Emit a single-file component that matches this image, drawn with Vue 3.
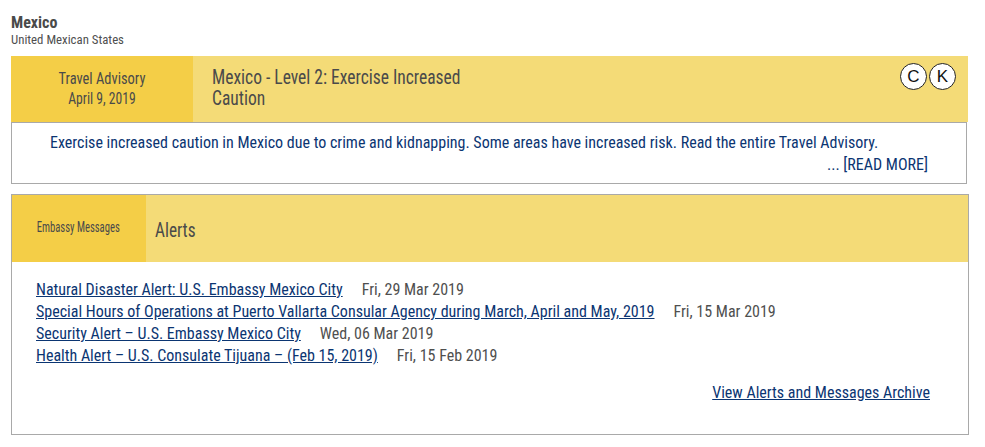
<template>
  <div class="page">
    <h1 class="country">Mexico</h1>
    <div class="official">United Mexican States</div>

    <section class="advisory">
      <div class="banner">
        <div class="banner-tag">
          <div class="tag-title">Travel Advisory</div>
          <div class="tag-date">April 9, 2019</div>
        </div>
        <h2 class="banner-title">Mexico - Level 2: Exercise Increased Caution</h2>
        <div class="badges">
          <span class="badge">C</span>
          <span class="badge">K</span>
        </div>
      </div>
      <div class="advisory-body">
        <p class="summary">Exercise increased caution in Mexico due to crime and kidnapping. Some areas have increased risk. Read the entire Travel Advisory.</p>
        <p class="more">... <a href="#">[READ MORE]</a></p>
      </div>
    </section>

    <section class="messages">
      <div class="msg-head">
        <div class="msg-tag"><span class="squeeze">Embassy Messages</span></div>
        <h2 class="msg-title">Alerts</h2>
      </div>
      <div class="msg-body">
        <ul class="alerts">
          <li v-for="a in alerts" :key="a.title">
            <a href="#" class="alert-link">{{ a.title }}</a>
            <span class="alert-date">{{ a.date }}</span>
          </li>
        </ul>
        <div class="archive"><a href="#" class="alert-link">View Alerts and Messages Archive</a></div>
      </div>
    </section>
  </div>
</template>

<script setup>
const alerts = [
  { title: "Natural Disaster Alert: U.S. Embassy Mexico City", date: "Fri, 29 Mar 2019" },
  { title: "Special Hours of Operations at Puerto Vallarta Consular Agency during March, April and May, 2019", date: "Fri, 15 Mar 2019" },
  { title: "Security Alert – U.S. Embassy Mexico City", date: "Wed, 06 Mar 2019" },
  { title: "Health Alert – U.S. Consulate Tijuana – (Feb 15, 2019)", date: "Fri, 15 Feb 2019" },
];
</script>

<style>
html, body {
  background: #fff;
}
</style>

<style scoped>
.page {
  width: 985px;
  height: 447px;
  box-sizing: border-box;
  padding: 14px 16px 0 11px;
  font-family: Roboto, sans-serif;
  font-stretch: 75%;
  color: #4f4f4f;
  overflow: hidden;
}
.country {
  margin: 0;
  font-size: 16px;
  line-height: 18px;
  font-weight: 700;
  color: #4a4a4a;
}
.official {
  font-size: 12.8px;
  line-height: 15px;
  margin-bottom: 9px;
}
.banner {
  display: flex;
  height: 66px;
  width: 957px;
  background: #f4db77;
}
.banner-tag {
  width: 182px;
  background: #f4ce47;
  text-align: center;
  padding-top: 12px;
  box-sizing: border-box;
  color: #4a4a4a;
}
/* the heading face is narrower than Roboto's narrowest width, so squeeze it */
.tag-title {
  font-size: 17px;
  line-height: 21px;
  transform: scaleX(0.85);
}
.tag-date {
  font-size: 16px;
  line-height: 20px;
  transform: scaleX(0.85);
}
.banner-title {
  margin: 11px 0 0 19px;
  width: 340px;
  font-size: 21px;
  line-height: 21px;
  font-weight: 400;
  color: #4a4a4a;
  transform: scaleX(0.833);
  transform-origin: left top;
}
.badges {
  margin-left: auto;
  margin-right: 12px;
  margin-top: 7px;
  display: flex;
  gap: 2px;
}
.badge {
  width: 25px;
  height: 25px;
  border: 1px solid #222;
  border-radius: 50%;
  background: #fff;
  color: #111;
  font-family: "Liberation Sans", sans-serif;
  font-stretch: normal;
  font-size: 17px;
  line-height: 25px;
  text-align: center;
}
.advisory-body {
  width: 956px;
  height: 62px;
  box-sizing: border-box;
  border: 1px solid #a9a9a9;
  padding: 9px 38px 0 38px;
  color: #0b3572;
  font-size: 16px;
  line-height: 22px;
}
.summary, .more {
  margin: 0;
}
.more {
  text-align: right;
}
.more a {
  color: #0b3572;
  text-decoration: none;
}
.messages {
  margin-top: 10px;
  width: 958px;
  height: 241px;
  box-sizing: border-box;
  border: 1px solid #a9a9a9;
}
.msg-head {
  display: flex;
  height: 67px;
  background: #f4db77;
}
.msg-tag {
  width: 134px;
  background: #f4ce47;
  box-sizing: border-box;
  padding-top: 24px;
  text-align: center;
  font-size: 14px;
  line-height: 17px;
  color: #4a4a4a;
}
.squeeze {
  display: block;
  white-space: nowrap;
  transform: scaleX(0.76) translateX(-1px);
}
.msg-title {
  margin: 23px 0 0 9px;
  font-size: 21px;
  line-height: 24px;
  font-weight: 400;
  color: #4a4a4a;
  transform: scaleX(0.82);
  transform-origin: left top;
}
.msg-body {
  padding: 17px 38px 0 24px;
}
.alerts {
  list-style: none;
  margin: 0;
  padding: 0;
  font-size: 16px;
  line-height: 22px;
}
.alert-link {
  color: #0b3572;
  text-decoration: underline;
}
.alert-date {
  margin-left: 19px;
}
.archive {
  margin-top: 15px;
  text-align: right;
  font-size: 16px;
  line-height: 22px;
}
</style>
